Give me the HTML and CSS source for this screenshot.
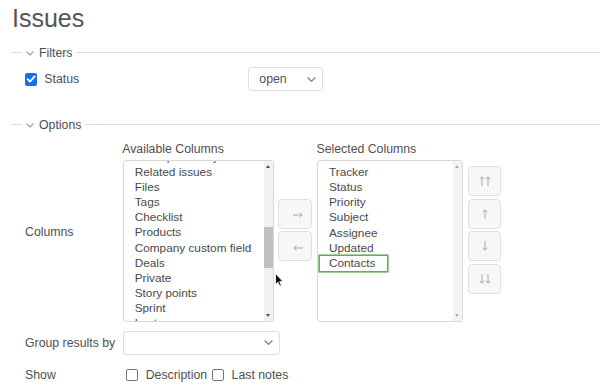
FILE: index.html
```html
<!DOCTYPE html>
<html>
<head>
<meta charset="utf-8">
<link rel="stylesheet" href="styles.css">
</head>
<body>
<div class="page">
  <h2 class="title">Issues</h2>

  <div class="legend">
    <span class="seg"></span>
    <svg class="chev" width="8" height="5" viewBox="0 0 8 5"><path d="M0.6 0.6 L4 4 L7.4 0.6" fill="none" stroke="#9a9a9a" stroke-width="1.2"/></svg>
    <span class="ltext">Filters</span>
    <span class="line"></span>
  </div>
  <div class="filter-row">
    <span class="cb checked"><svg width="12" height="12" viewBox="0 0 12 12"><path d="M2.6 6.2 L5 8.6 L9.6 3.4" fill="none" stroke="#fff" stroke-width="1.9" stroke-linecap="round" stroke-linejoin="round"/></svg></span>
    <span class="flabel">Status</span>
    <div class="select op-select">
      <span>open</span>
      <svg width="9" height="5" viewBox="0 0 9 5"><path d="M0.6 0.6 L4.5 4.3 L8.4 0.6" fill="none" stroke="#8a8a8a" stroke-width="1.4"/></svg>
    </div>
  </div>

  <div class="legend options">
    <span class="seg"></span>
    <svg class="chev" width="8" height="5" viewBox="0 0 8 5"><path d="M0.6 0.6 L4 4 L7.4 0.6" fill="none" stroke="#9a9a9a" stroke-width="1.2"/></svg>
    <span class="ltext">Options</span>
    <span class="line"></span>
  </div>

  <div class="orow columns-row">
    <div class="olabel">Columns</div>
    <div class="columns">
      <div class="col avail">
        <div class="col-title">Available Columns</div>
        <div class="listbox">
          <div class="items avail-items">
            <div class="item">Last updated by</div>
            <div class="item">Related issues</div>
            <div class="item">Files</div>
            <div class="item">Tags</div>
            <div class="item">Checklist</div>
            <div class="item">Products</div>
            <div class="item">Company custom field</div>
            <div class="item">Deals</div>
            <div class="item">Private</div>
            <div class="item">Story points</div>
            <div class="item">Sprint</div>
            <div class="item">Last message</div>
          </div>
          <div class="sbar">
            <div class="sb-up"><span class="tri-up"></span></div>
            <div class="sb-track"><div class="thumb"></div></div>
            <div class="sb-down"><span class="tri-down"></span></div>
          </div>
        </div>
      </div>
      <div class="btns mid-btns">
        <div class="btn"><svg width="10" height="6" viewBox="0 0 10 6"><path d="M0 3 H9 M6.5 0.8 L9.2 3 L6.5 5.2" fill="none" stroke="#a8a8a8" stroke-width="1"/></svg></div>
        <div class="btn"><svg width="10" height="6" viewBox="0 0 10 6"><path d="M10 3 H1 M3.5 0.8 L0.8 3 L3.5 5.2" fill="none" stroke="#a8a8a8" stroke-width="1"/></svg></div>
      </div>
      <div class="col sel">
        <div class="col-title">Selected Columns</div>
        <div class="listbox">
          <div class="items sel-items">
            <div class="item">Tracker</div>
            <div class="item">Status</div>
            <div class="item">Priority</div>
            <div class="item">Subject</div>
            <div class="item">Assignee</div>
            <div class="item">Updated</div>
            <div class="item picked">Contacts</div>
          </div>
          <div class="sbar light">
            <div class="sb-up"><span class="tri-up"></span></div>
            <div class="sb-track"></div>
            <div class="sb-down"><span class="tri-down"></span></div>
          </div>
        </div>
      </div>
      <div class="btns side-btns">
        <div class="btn"><svg width="12" height="10" viewBox="0 0 12 10"><path d="M3 10 V1 M0.8 3.2 L3 0.8 L5.2 3.2 M9 10 V1 M6.8 3.2 L9 0.8 L11.2 3.2" fill="none" stroke="#a8a8a8" stroke-width="1"/></svg></div>
        <div class="btn"><svg width="6" height="10" viewBox="0 0 6 10"><path d="M3 10 V1 M0.8 3.2 L3 0.8 L5.2 3.2" fill="none" stroke="#a8a8a8" stroke-width="1"/></svg></div>
        <div class="btn"><svg width="6" height="10" viewBox="0 0 6 10"><path d="M3 0 V9 M0.8 6.8 L3 9.2 L5.2 6.8" fill="none" stroke="#a8a8a8" stroke-width="1"/></svg></div>
        <div class="btn"><svg width="12" height="10" viewBox="0 0 12 10"><path d="M3 0 V9 M0.8 6.8 L3 9.2 L5.2 6.8 M9 0 V9 M6.8 6.8 L9 9.2 L11.2 6.8" fill="none" stroke="#a8a8a8" stroke-width="1"/></svg></div>
      </div>
    </div>
  </div>

  <div class="orow group-row">
    <div class="olabel">Group results by</div>
    <div class="select group-select">
      <span></span>
      <svg width="9" height="5" viewBox="0 0 9 5"><path d="M0.6 0.6 L4.5 4.3 L8.4 0.6" fill="none" stroke="#8a8a8a" stroke-width="1.4"/></svg>
    </div>
  </div>

  <div class="orow show-row">
    <div class="olabel">Show</div>
    <div class="show">
      <span class="cb"></span><span class="stext">Description</span>
      <span class="cb cb2"></span><span class="stext">Last notes</span>
    </div>
  </div>

  <svg class="cursor" width="9" height="14" viewBox="0 0 9 14"><path d="M0.5 0.5 L0.5 11.5 L3 9.2 L4.8 13.2 L6.4 12.5 L4.7 8.6 L8 8.6 Z" fill="#111" stroke="#fff" stroke-width="0.8" stroke-linejoin="round"/></svg>
</div>
</body>
</html>
```

FILE: styles.css
```css
html, body {
  margin: 0;
  padding: 0;
  background: #fff;
}
body {
  font-family: "Liberation Sans", Arial, sans-serif;
  font-size: 12.3px;
  color: #505050;
}
.page {
  position: relative;
  padding: 3px 0 0 12px;
  width: 588px;
  height: 387px;
  overflow: hidden;
}
.title {
  margin: 0;
  font-size: 25px;
  line-height: 30px;
  font-weight: normal;
  color: #555;
}
.legend {
  margin-top: 11.5px;
  height: 16px;
  display: flex;
  align-items: center;
}
.legend.options {
  margin-top: 25px;
}
.seg {
  width: 10px;
  height: 1px;
  background: #dcdcdc;
}
.chev {
  margin-left: 3.5px;
  margin-top: 1px;
}
.ltext {
  margin-left: 5.5px;
  line-height: 16px;
  color: #4d4d4d;
}
.line {
  flex: 1;
  height: 1px;
  background: #dcdcdc;
  margin-left: 4px;
}
.filter-row {
  margin-top: 6px;
  height: 25px;
  display: flex;
  align-items: center;
  padding-left: 13px;
}
.cb {
  display: inline-block;
  box-sizing: border-box;
  width: 12.3px;
  height: 12.3px;
  border: 1px solid #767676;
  border-radius: 2px;
  background: #fff;
  flex: none;
}
.cb.checked {
  border: none;
  background: #1a6fe3;
  display: flex;
  margin-top: 1px;
}
.flabel {
  margin-left: 7px;
  width: 204px;
}
.select {
  box-sizing: border-box;
  display: flex;
  align-items: center;
  justify-content: space-between;
  border: 1px solid #dedede;
  border-radius: 3px;
  background: #fff;
  padding: 0 6px 0 10px;
}
.op-select {
  width: 75px;
  height: 24.5px;
}
.orow {
  display: flex;
  align-items: center;
}
.olabel {
  box-sizing: border-box;
  width: 110.7px;
  padding-left: 13px;
  flex: none;
}
.columns-row {
  margin-top: 9.5px;
}
.columns {
  display: flex;
  align-items: center;
}
.col-title {
  line-height: 15px;
  margin-bottom: 3px;
  margin-left: -0.5px;
}
.listbox {
  box-sizing: border-box;
  height: 162px;
  border: 1px solid #d8d8d8;
  border-radius: 3px;
  display: flex;
  overflow: hidden;
  background: #fff;
}
.avail .listbox { width: 151.3px; }
.sel .listbox { width: 146px; }
.items {
  flex: 1;
  overflow: hidden;
  color: #4a4a4a;
  font-size: 11.8px;
}
.avail-items .item:first-child { margin-top: -11.2px; }
.sel-items { padding-top: 4px; }
.item {
  line-height: 15.14px;
  height: 15.14px;
  padding-left: 11px;
  white-space: nowrap;
}
.item.picked {
  width: fit-content;
  margin-left: 2.4px;
  padding-left: 8.6px;
  padding-right: 11px;
  box-shadow: 0 0 0 1.6px #5db34b;
}
.sbar {
  width: 9px;
  flex: none;
  display: flex;
  flex-direction: column;
  background: #f1f1f1;
}
.sb-up {
  height: 11px;
  display: flex;
  justify-content: center;
  align-items: flex-start;
  padding-top: 3.5px;
  box-sizing: border-box;
}
.sb-down {
  height: 11px;
  display: flex;
  justify-content: center;
  align-items: flex-end;
  padding-bottom: 4.5px;
  box-sizing: border-box;
}
.sb-track { flex: 1; }
.thumb {
  margin-top: 54.5px;
  height: 41.7px;
  background: #c1c1c1;
}
.tri-up {
  width: 0; height: 0;
  border-left: 2.5px solid transparent;
  border-right: 2.5px solid transparent;
  border-bottom: 3px solid #505050;
}
.tri-down {
  width: 0; height: 0;
  border-left: 2.5px solid transparent;
  border-right: 2.5px solid transparent;
  border-top: 3px solid #505050;
}
.sbar.light { background: #f4f4f4; }
.sbar.light .tri-up { border-bottom-color: #b0b0b0; }
.sbar.light .tri-down { border-top-color: #b0b0b0; }
.btns {
  display: flex;
  flex-direction: column;
  gap: 2.5px;
}
.mid-btns {
  margin-left: 4.3px;
  margin-top: -4px;
}
.sel { margin-left: 4.7px; }
.side-btns {
  margin-left: 5px;
  margin-top: -4px;
}
.btn {
  box-sizing: border-box;
  width: 34px;
  height: 30px;
  border: 1px solid #e0e0e0;
  border-radius: 4px;
  background: #f7f7f7;
  display: flex;
  align-items: center;
  justify-content: center;
}
.side-btns .btn { width: 33.5px; }
.mid-btns .btn svg { margin-left: 6px; margin-top: 3px; }
.group-row { margin-top: 8.5px; }
.group-select {
  width: 157.6px;
  height: 24.5px;
}
.show-row {
  margin-top: 12.5px;
  height: 15px;
}
.show {
  display: flex;
  align-items: center;
  margin-left: 3.3px;
}
.stext { margin-left: 7.4px; }
.cb2 { margin-left: 4.7px; }
.cursor {
  position: absolute;
  left: 274.5px;
  top: 272.5px;
}
```
